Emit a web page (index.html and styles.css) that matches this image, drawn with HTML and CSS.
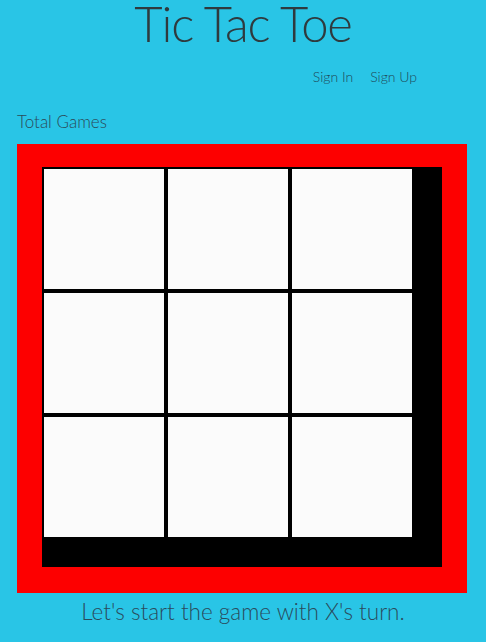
FILE: index.html
```
<!DOCTYPE html>
<html>
<head>
<meta charset="utf-8">
<link rel="stylesheet" href="styles.css">
</head>
<body>
<h1 class="title">Tic Tac Toe</h1>
<nav class="nav">
  <a class="nav-link">Sign In</a>
  <a class="nav-link">Sign Up</a>
</nav>
<div class="stats">Total Games</div>
<div class="frame">
  <div class="board">
    <div class="cell"></div><div class="cell"></div><div class="cell"></div>
    <div class="cell"></div><div class="cell"></div><div class="cell"></div>
    <div class="cell"></div><div class="cell"></div><div class="cell"></div>
  </div>
</div>
<p class="message">Let's start the game with X's turn.</p>
</body>
</html>
```
FILE: styles.css
```
html, body {
  margin: 0;
  padding: 0;
  background: #29c5e6;
  font-family: Lato, "Open Sans", sans-serif;
  font-weight: 300;
  color: #2b3b44;
}
.title {
  margin: -8px 0 0;
  height: 70px;
  text-align: center;
  font-size: 49px;
  font-weight: 300;
  letter-spacing: -1.2px;
  line-height: 62px;
  color: #2f3a3e;
}
.nav {
  display: flex;
  justify-content: flex-end;
  gap: 17px;
  padding-right: 69px;
  height: 30px;
  line-height: 30px;
  font-size: 14px;
}
.nav-link {
  color: #1f4a5a;
}
.stats {
  padding: 20px 17px 0;
  height: 32px;
  font-size: 17px;
  line-height: 20px;
  color: #2b4a58;
}
.frame {
  margin: 0 19px 0 17px;
  width: 400px;
  height: 400px;
  padding: 23px 25px 26px 25px;
  background: #fd0000;
}
.board {
  width: 400px;
  height: 400px;
  background: #000;
  display: grid;
  grid-template-columns: repeat(3, 124px);
  grid-template-rows: repeat(3, 124px);
}
.cell {
  background: #fbfbfb;
  border: 2px solid #000;
}
.message {
  margin: 4px 0 0;
  text-align: center;
  font-size: 22.5px;
  line-height: 30px;
  color: #2a4b5c;
}
```
